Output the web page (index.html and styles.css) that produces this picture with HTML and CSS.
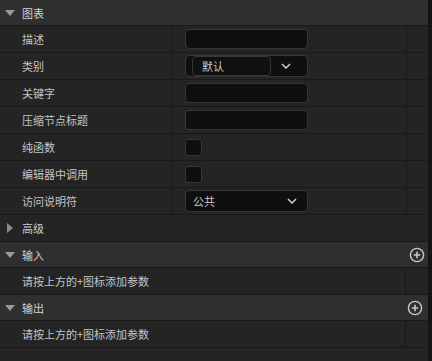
FILE: index.html
```html
<!DOCTYPE html>
<html>
<head>
<meta charset="utf-8">
<link rel="stylesheet" href="styles.css">
</head>
<body>
<div class="page">
  <div class="panel">
    <div class="section">
      <span class="tri-down"></span><span class="section-title">图表</span>
    </div>
    <div class="row">
      <div class="label">描述</div>
      <div class="value"><div class="textbox"></div></div>
      <div class="extra"></div>
    </div>
    <div class="row">
      <div class="label">类别</div>
      <div class="value">
        <div class="combo combo-cat">
          <div class="combo-inner">默认</div>
          <div class="chev-wrap"><svg width="10" height="6" viewBox="0 0 10 6"><path d="M1 1 L5 5 L9 1" fill="none" stroke="#cfcfcf" stroke-width="1.5"/></svg></div>
        </div>
      </div>
      <div class="extra"></div>
    </div>
    <div class="row">
      <div class="label">关键字</div>
      <div class="value"><div class="textbox"></div></div>
      <div class="extra"></div>
    </div>
    <div class="row">
      <div class="label">压缩节点标题</div>
      <div class="value"><div class="textbox"></div></div>
      <div class="extra"></div>
    </div>
    <div class="row">
      <div class="label">纯函数</div>
      <div class="value"><div class="checkbox"></div></div>
      <div class="extra"></div>
    </div>
    <div class="row">
      <div class="label">编辑器中调用</div>
      <div class="value"><div class="checkbox"></div></div>
      <div class="extra"></div>
    </div>
    <div class="row">
      <div class="label">访问说明符</div>
      <div class="value">
        <div class="combo combo-access">
          <span class="combo-text">公共</span>
          <svg width="10" height="6" viewBox="0 0 10 6"><path d="M1 1 L5 5 L9 1" fill="none" stroke="#cfcfcf" stroke-width="1.5"/></svg>
        </div>
      </div>
      <div class="extra"></div>
    </div>
    <div class="row row-adv">
      <span class="tri-right"></span><span class="adv-title">高级</span>
    </div>
    <div class="section">
      <span class="tri-down"></span><span class="section-title">输入</span>
      <span class="plus"><svg width="16" height="16" viewBox="0 0 16 16"><circle cx="8" cy="8" r="6.6" fill="none" stroke="#c8c8c8" stroke-width="1.4"/><path d="M8 4.8 V11.2 M4.8 8 H11.2" stroke="#c8c8c8" stroke-width="1.6"/></svg></span>
    </div>
    <div class="row">
      <div class="hint">请按上方的+图标添加参数</div>
      <div class="extra2"></div>
    </div>
    <div class="section">
      <span class="tri-down"></span><span class="section-title">输出</span>
      <span class="plus plus2"><svg width="16" height="16" viewBox="0 0 16 16"><circle cx="8" cy="8" r="6.6" fill="none" stroke="#c8c8c8" stroke-width="1.4"/><path d="M8 4.8 V11.2 M4.8 8 H11.2" stroke="#c8c8c8" stroke-width="1.6"/></svg></span>
    </div>
    <div class="row">
      <div class="hint">请按上方的+图标添加参数</div>
      <div class="extra2"></div>
    </div>
  </div>
  <div class="scrollbar"></div>
</div>
</body>
</html>
```

FILE: styles.css
```css
html, body {
  margin: 0;
  padding: 0;
  background: #242424;
}
body {
  font-family: "Noto Sans CJK SC", "Noto Sans", sans-serif;
  font-size: 11px;
  color: #c4c4c4;
  width: 432px;
  height: 361px;
  overflow: hidden;
}
.page {
  display: flex;
  height: 361px;
}
.panel {
  width: 428px;
  background: #242424;
}
.scrollbar {
  width: 4px;
  background: #141414;
}
.section {
  height: 25px;
  border-bottom: 1px solid #191919;
  background: #2f2f2f;
  display: flex;
  align-items: center;
  position: relative;
}
.section-title {
  color: #d2d2d2;
  margin-left: 7px;
}
.tri-down {
  width: 0;
  height: 0;
  margin-left: 5px;
  border-left: 5px solid transparent;
  border-right: 5px solid transparent;
  border-top: 6px solid #9a9a9a;
}
.tri-right {
  width: 0;
  height: 0;
  margin-left: 7px;
  border-top: 5px solid transparent;
  border-bottom: 5px solid transparent;
  border-left: 6px solid #8a8a8a;
}
.adv-title {
  margin-left: 9px;
  color: #c8c8c8;
}
.plus {
  position: absolute;
  right: 3px;
  top: 5px;
  height: 16px;
}
.plus2 {
  right: 5px;
}
.row {
  height: 26px;
  border-bottom: 1px solid #191919;
  display: flex;
  align-items: stretch;
}
.row-adv {
  align-items: center;
}
.label {
  width: 149px;
  padding-left: 22px;
  border-right: 1px solid #191919;
  display: flex;
  align-items: center;
}
.value {
  width: 221px;
  padding-left: 13px;
  border-right: 1px solid #191919;
  display: flex;
  align-items: center;
}
.extra {
  width: 21px;
}
.hint {
  width: 383px;
  padding-left: 22px;
  border-right: 1px solid #191919;
  display: flex;
  align-items: center;
}
.extra2 {
  width: 22px;
}
.textbox {
  width: 121px;
  height: 18px;
  background: #0f0f0f;
  border: 1px solid #363636;
  border-radius: 4px;
}
.checkbox {
  width: 15px;
  height: 15px;
  background: #0f0f0f;
  border: 1px solid #363636;
  border-radius: 3px;
}
.combo {
  width: 121px;
  height: 20px;
  background: #0f0f0f;
  border: 1px solid #363636;
  border-radius: 4px;
  display: flex;
  align-items: center;
  box-sizing: content-box;
}
.combo-inner {
  margin-left: 6px;
  width: 68px;
  height: 18px;
  padding-left: 9px;
  border: 1px solid #363636;
  border-radius: 4px;
  background: #101010;
  display: flex;
  align-items: center;
  color: #cacaca;
}
.chev-wrap {
  flex: 1;
  display: flex;
  justify-content: center;
  align-items: center;
  padding-right: 6px;
}
.combo-access {
  justify-content: space-between;
  padding-left: 7px;
  width: 104px;
  padding-right: 10px;
}
.combo-text {
  color: #cacaca;
}
```
